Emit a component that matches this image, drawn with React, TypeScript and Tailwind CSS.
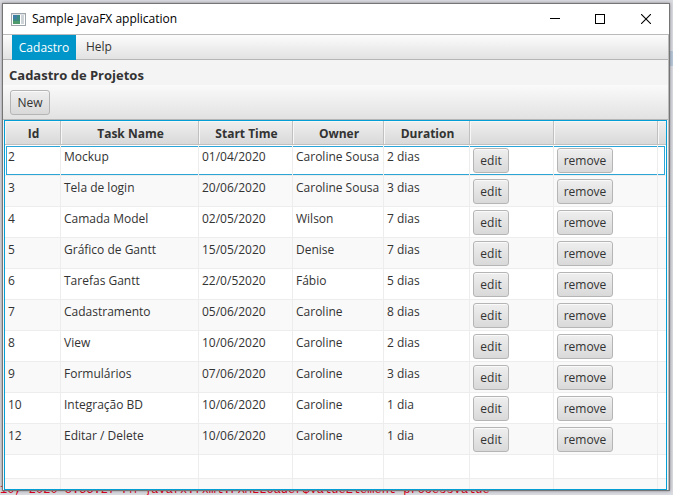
const FONT = 'font-["Open_Sans","Noto_Sans",sans-serif]';

const tasks = [
  ['2', 'Mockup', '01/04/2020', 'Caroline Sousa', '2 dias'],
  ['3', 'Tela de login', '20/06/2020', 'Caroline Sousa', '3 dias'],
  ['4', 'Camada Model', '02/05/2020', 'Wilson', '7 dias'],
  ['5', 'Gráfico de Gantt', '15/05/2020', 'Denise', '7 dias'],
  ['6', 'Tarefas Gantt', '22/0/52020', 'Fábio', '5 dias'],
  ['7', 'Cadastramento', '05/06/2020', 'Caroline', '8 dias'],
  ['8', 'View', '10/06/2020', 'Caroline', '2 dias'],
  ['9', 'Formulários', '07/06/2020', 'Caroline', '3 dias'],
  ['10', 'Integração BD', '10/06/2020', 'Caroline', '1 dia'],
  ['12', 'Editar / Delete', '10/06/2020', 'Caroline', '1 dia'],
];

const headers = ['Id', 'Task Name', 'Start Time', 'Owner', 'Duration', '', '', ''];

// The focus ring of a row sits one pixel inside it.
const ring = {
  first:
    'shadow-[inset_0_1px_0_#fff,inset_1px_0_0_#fff,inset_0_2px_0_#2aa5d5,inset_2px_0_0_#2aa5d5,inset_0_-1px_0_#2aa5d5]',
  middle: 'shadow-[inset_0_1px_0_#fff,inset_0_2px_0_#2aa5d5,inset_0_-1px_0_#2aa5d5]',
  last: 'shadow-[inset_0_1px_0_#fff,inset_-1px_0_0_#fff,inset_0_2px_0_#2aa5d5,inset_-2px_0_0_#2aa5d5,inset_0_-1px_0_#2aa5d5]',
};

function FxButton({ children, width, label }: { children: string; width: string; label?: string }) {
  return (
    <button
      type="button"
      aria-label={label}
      className={`${width} block h-[25px] rounded-[3px] border border-[#b5b5b5] bg-linear-to-b from-[#efefef] to-[#d9d9d9] text-center text-xs leading-[22px] whitespace-nowrap text-[#333333] shadow-[inset_0_1px_0_#fafafa]`}
    >
      {children}
    </button>
  );
}

function TitleBar() {
  return (
    <header className="flex h-[30px] shrink-0 items-center bg-white pl-2">
      <svg width="15" height="13" viewBox="0 0 15 13" shapeRendering="crispEdges" aria-hidden="true">
        <rect x="0.5" y="0.5" width="14" height="12" fill="#ffffff" stroke="#9da5ab" />
        <rect x="1" y="1" width="13" height="1" fill="#dfe3e6" />
        <rect x="2" y="2" width="7" height="9" fill="#3c8a80" />
        <rect x="2" y="2" width="4" height="4" fill="#3f7fa6" />
        <rect x="2" y="8" width="7" height="3" fill="#4f9a6c" />
        <rect x="10" y="2" width="3" height="9" fill="#cfd4d8" />
      </svg>
      <h1 className="ml-[6px] flex-1 text-xs text-black">Sample JavaFX application</h1>
      <button type="button" aria-label="Minimize" className="flex h-full w-[45px] items-center justify-center">
        <svg width="10" height="10" shapeRendering="crispEdges"><path d="M0 4.5H10" stroke="#000" /></svg>
      </button>
      <button type="button" aria-label="Maximize" className="flex h-full w-[45px] items-center justify-center">
        <svg width="10" height="10" shapeRendering="crispEdges"><rect x="0.5" y="0.5" width="9" height="9" fill="none" stroke="#000" /></svg>
      </button>
      <button type="button" aria-label="Close" className="flex h-full w-[47px] items-center justify-center">
        <svg width="10" height="10"><path d="M0 0L10 10M10 0L0 10" stroke="#000" strokeWidth="1.1" /></svg>
      </button>
    </header>
  );
}

function TaskTable() {
  return (
    <div className="min-h-0 flex-1 overflow-hidden border border-[#039ed3] bg-white">
      <table className="w-full table-fixed border-separate border-spacing-0 text-xs text-[#333333]">
        <colgroup>
          <col className="w-14" />
          <col className="w-[138px]" />
          <col className="w-[94px]" />
          <col className="w-[91px]" />
          <col className="w-[86px]" />
          <col className="w-[84px]" />
          <col className="w-[104px]" />
          <col />
        </colgroup>
        <thead>
          <tr className="h-6">
            {headers.map((h, i) => (
              <th
                key={i}
                className="border-r border-b border-[#c0c0c0] bg-linear-to-b from-[#efefef] to-[#d9d9d9] pt-[3px] pr-0 pb-0 pl-[2px] font-bold shadow-[inset_1px_1px_0_#f7f7f7] last:border-r-0"
              >
                {h}
              </th>
            ))}
          </tr>
        </thead>
        <tbody>
          {tasks.map((task, r) => {
            const edge = 'border-r border-b border-[#ededed] last:border-r-0 align-top pt-[3px] pr-0 pb-0 pl-[3px]';
            const focused = r === 0;
            const middle = focused ? ring.middle : '';
            return (
              <tr key={task[0]} className="h-[31px] odd:bg-white even:bg-[#f9f9f9]">
                {task.map((value, c) => (
                  <td
                    key={c}
                    className={`${edge} ${focused && c === 0 ? ring.first : middle} leading-[18px] whitespace-nowrap`}
                  >
                    {value}
                  </td>
                ))}
                <td className={`${edge} ${middle}`}>
                  <FxButton width="w-9" label={`edit ${task[1]}`}>edit</FxButton>
                </td>
                <td className={`${edge} ${middle}`}>
                  <FxButton width="w-14" label={`remove ${task[1]}`}>remove</FxButton>
                </td>
                <td className={`${edge} ${focused ? ring.last : ''}`} />
              </tr>
            );
          })}
          {[0, 1].map((n) => (
            <tr key={n} className="h-6 odd:bg-white even:bg-[#f9f9f9]">
              {headers.map((_, c) => (
                <td key={c} className="border-r border-b border-[#ededed] p-0 last:border-r-0" />
              ))}
            </tr>
          ))}
        </tbody>
      </table>
    </div>
  );
}

export default function App() {
  return (
    <div className={`${FONT} relative flex h-screen overflow-hidden bg-[#dadae1] pt-[3px] pr-[3px] pb-[4px] pl-[2px]`}>
      <div className="absolute top-[51px] right-0 h-[15px] w-[3px] bg-[#b9c8da]" />
      <p className="absolute bottom-0 left-0 font-['Liberation_Mono',monospace] text-xs leading-[10px] whitespace-nowrap text-[#e00020]">
        10, 2020 8:55:27 PM javafx.fxml.FXMLLoader$ValueElement processValue
      </p>
      <div className="relative flex min-w-0 flex-1 flex-col border border-[#757575] bg-[#f4f4f4] shadow-[0_0_3px_#00000066]">
        <TitleBar />
        <div className="flex min-h-0 flex-1 flex-col border-t border-r border-[#bababa]">
          <nav className="flex h-[25px] shrink-0 border-b border-[#b5b5b5] bg-linear-to-b from-[#fcfcfc] to-[#e2e2e2] pl-[9px] text-xs">
            <button type="button" className="-mb-px w-16 bg-[#0096c9] text-center text-white">Cadastro</button>
            <button type="button" className="px-[10px] text-[#333333]">Help</button>
          </nav>
          <h2 className="h-[25px] shrink-0 pl-[6px] text-[13px] leading-[31px] font-bold text-[#333333]">
            Cadastro de Projetos
          </h2>
          <div className="flex h-[35px] shrink-0 items-start border-b border-[#b5b5b5] bg-linear-to-b from-[#fafafa] to-[#e2e2e2] pt-[5px] pl-[7px]">
            <FxButton width="w-10">New</FxButton>
          </div>
          <div className="flex min-h-0 flex-1 flex-col pr-px pl-px">
            <TaskTable />
          </div>
        </div>
      </div>
    </div>
  );
}
